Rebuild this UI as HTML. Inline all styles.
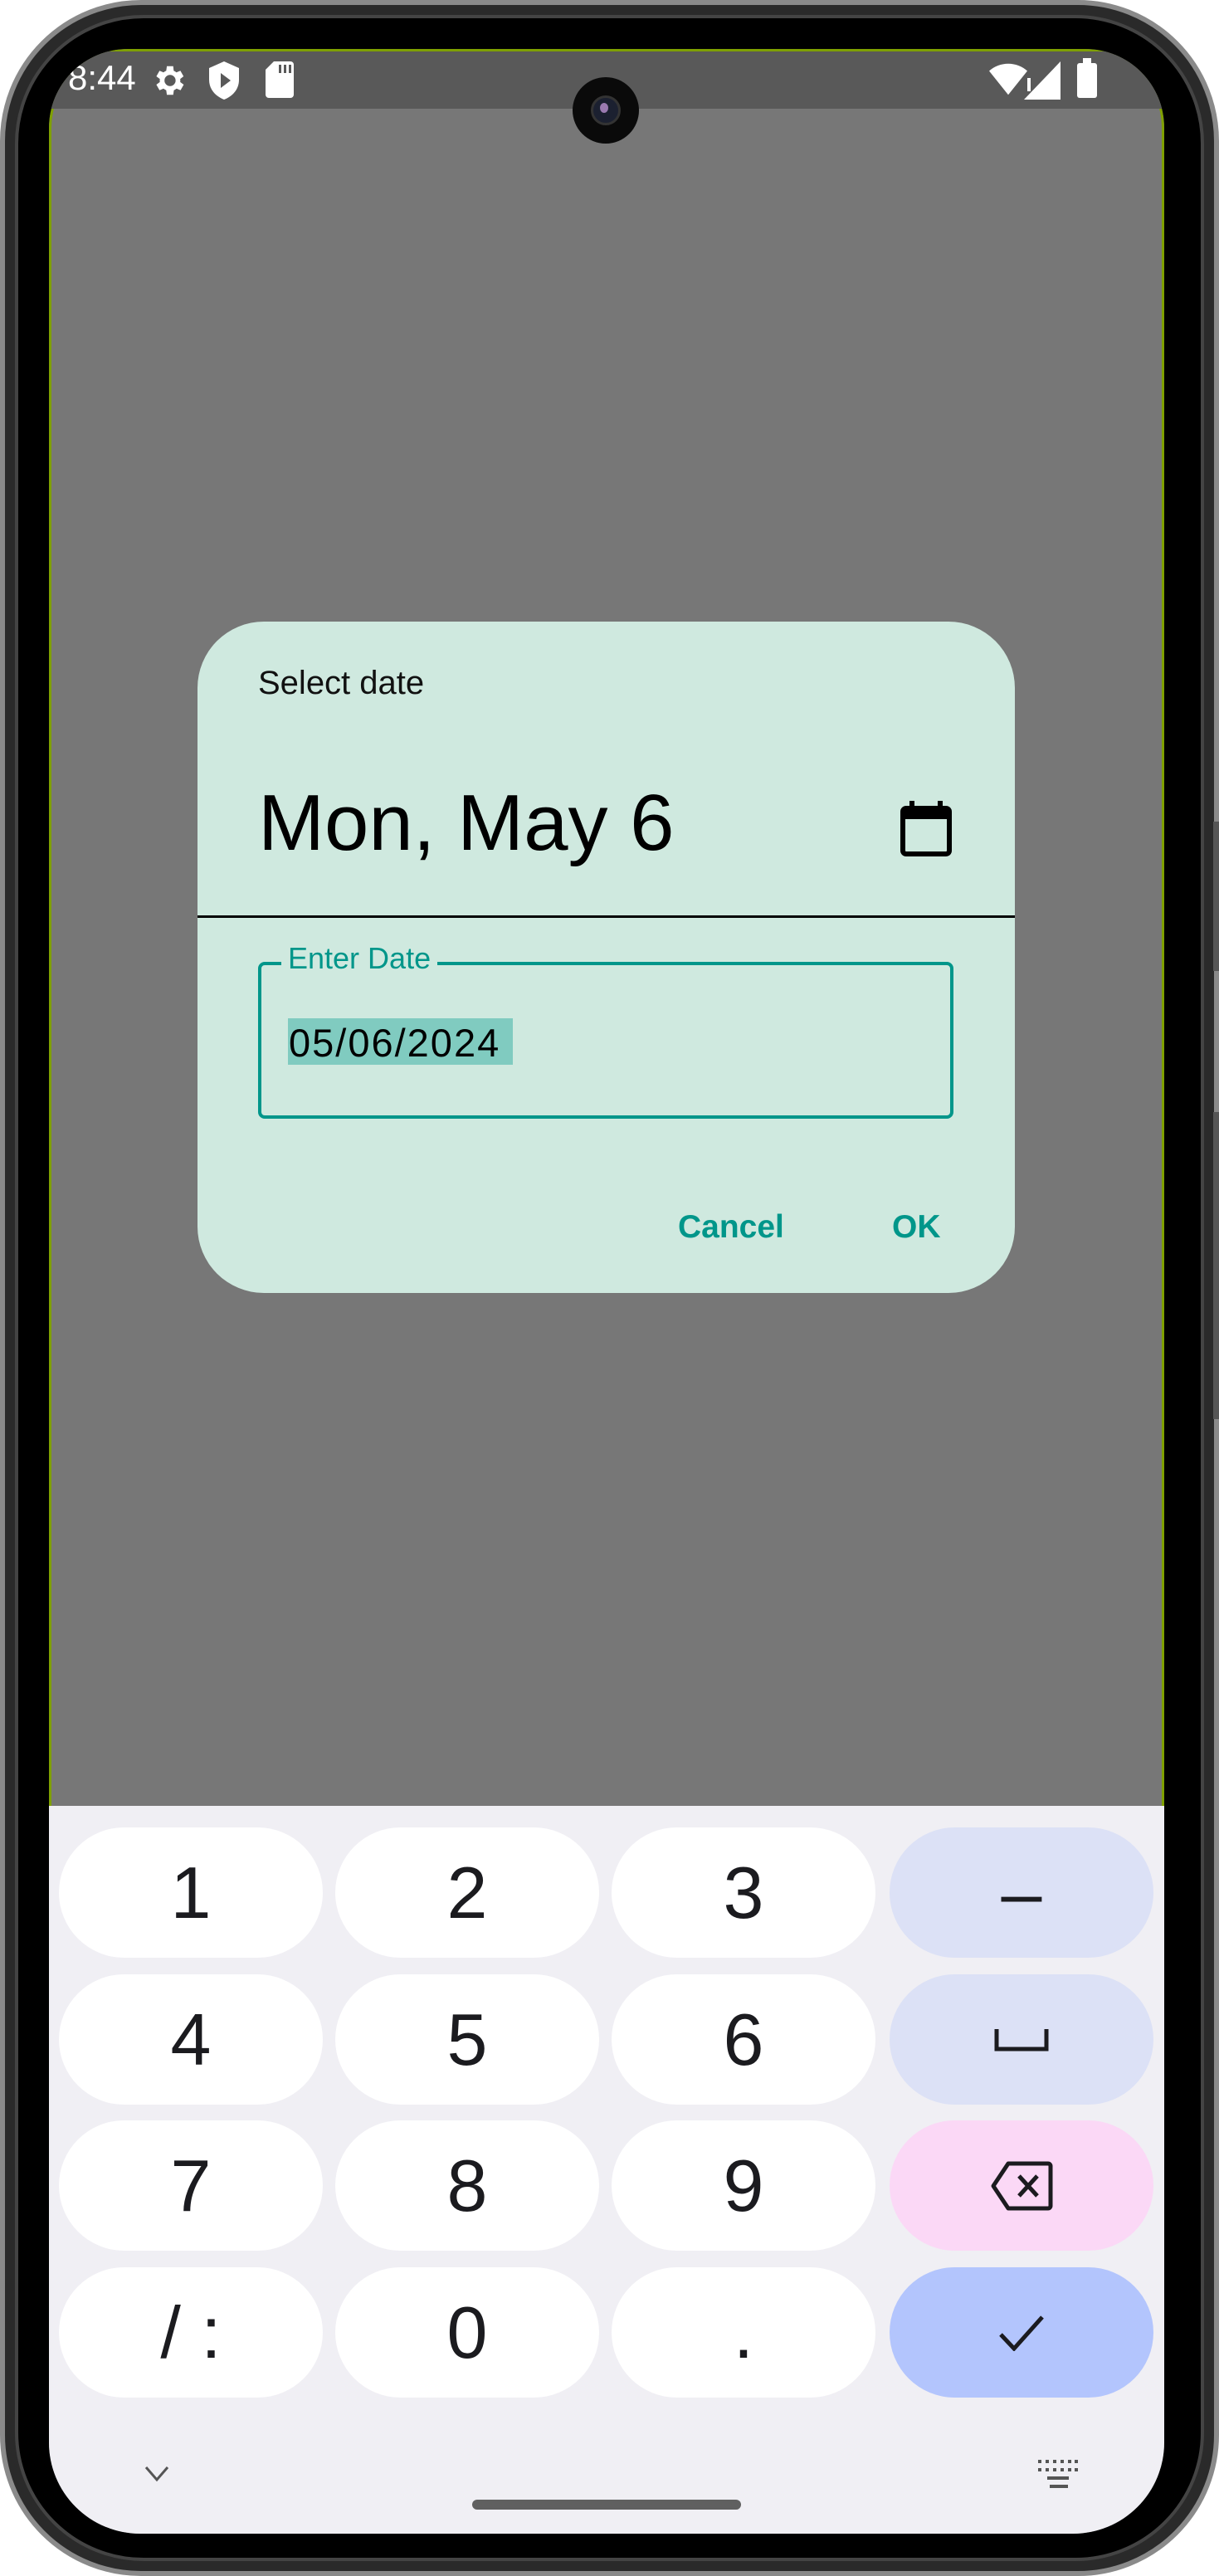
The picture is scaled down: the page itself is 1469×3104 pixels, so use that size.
<!DOCTYPE html>
<html><head><meta charset="utf-8"><style>
*{margin:0;padding:0;box-sizing:border-box}
body{width:1469px;height:3104px;background:#fff;position:relative;overflow:hidden;font-family:"Liberation Sans",sans-serif}
.abs{position:absolute}
.frame{left:0;top:0;width:1469px;height:3104px;border-radius:170px;background:#2a2a2a;border:6px solid #8a8a8a}
.bezel{left:18px;top:18px;width:1433px;height:3068px;border-radius:155px;background:#000;border:4px solid #444}
.screen{left:59px;top:59px;width:1344px;height:2994px;border-radius:95px 95px 110px 110px;overflow:hidden;background:#777}
.status{left:0;top:0;width:1344px;height:72px;background:#595959}
.kb{left:0;top:2117px;width:1344px;height:877px;background:#f0eff4}
.key{position:absolute;width:318px;height:157px;border-radius:79px;background:#fff;display:flex;align-items:center;justify-content:center;font-size:88px;color:#1b1b1f}
.dlg{left:238px;top:749px;width:985px;height:809px;border-radius:80px;background:#cfe9df}
</style></head><body>
<div class="abs frame"></div>
<div class="abs" style="left:1462px;top:990px;width:7px;height:180px;background:#555"></div>
<div class="abs" style="left:1462px;top:1340px;width:7px;height:370px;background:#555"></div>
<div class="abs bezel"></div>
<div class="abs screen">
  <div class="abs" style="left:0;top:0;width:1344px;height:2117px;border:3px solid #7fa000;border-bottom:none;border-radius:95px 95px 0 0"></div>
  <div class="abs status" style="left:3px;top:3px;width:1338px;height:69px">
    <div class="abs" style="left:20px;top:8px;color:#fff;font-size:42px">8:44</div>
    <svg class="abs" style="left:118px;top:12px" width="46" height="46" viewBox="0 0 24 24"><path fill="#fff" d="M19.4 13a7.5 7.5 0 000-2l2.1-1.6-2-3.5-2.5 1a7 7 0 00-1.7-1L15 3h-4l-.4 2.9a7 7 0 00-1.7 1l-2.5-1-2 3.5L6.6 11a7.5 7.5 0 000 2l-2.2 1.6 2 3.5 2.5-1a7 7 0 001.7 1L11 21h4l.4-2.9a7 7 0 001.7-1l2.5 1 2-3.5zM13 15.5a3.5 3.5 0 110-7 3.5 3.5 0 010 7z"/></svg>
    <svg class="abs" style="left:190px;top:12px" width="36" height="46" viewBox="0 0 18 23"><path fill="#fff" d="M9 0L0 4v7c0 6 4 10 9 12 5-2 9-6 9-12V4z"/><path fill="#595959" d="M7 7v9l6-4.5z"/></svg>
    <svg class="abs" style="left:258px;top:12px" width="34" height="44" viewBox="0 0 17 22"><path fill="#fff" d="M5 0h10a2 2 0 012 2v18a2 2 0 01-2 2H2a2 2 0 01-2-2V5z"/><path fill="#595959" d="M8 2h1.5v5H8zM11 2h1.5v5H11zM14 2h1.5v5H14z"/></svg>
    <svg class="abs" style="left:1130px;top:12px" width="46" height="46" viewBox="0 0 24 24"><path fill="#fff" d="M12 21L0 6a18 18 0 0124 0z"/></svg>
    <svg class="abs" style="left:1172px;top:12px" width="44" height="46" viewBox="0 0 22 23"><path fill="#fff" d="M22 0v23H0z"/><rect x="2" y="10" width="2" height="8" fill="#fff"/></svg>
    <div class="abs" style="left:1236px;top:14px;width:24px;height:42px;background:#fff;border-radius:3px"></div>
    <div class="abs" style="left:1243px;top:8px;width:10px;height:8px;background:#fff"></div>
  </div>
  <div class="abs" style="left:631px;top:34px;width:80px;height:80px;border-radius:50%;background:#0a0a0a"></div>
  <div class="abs" style="left:653px;top:56px;width:36px;height:36px;border-radius:50%;background:#1b2030;border:3px solid #333"></div>
  <div class="abs" style="left:664px;top:65px;width:10px;height:12px;border-radius:50%;background:#9a7ab0"></div>

  <div class="abs dlg" style="left:179px;top:690px">
    <div class="abs" style="left:73px;top:52px;font-size:40px;color:#111">Select date</div>
    <div class="abs" style="left:73px;top:195px;font-size:96px;color:#000;line-height:1">Mon, May 6</div>
    <svg class="abs" style="left:846px;top:215px" width="64" height="68" viewBox="0 0 64 68"><rect x="4" y="10" width="56" height="55" rx="4" fill="none" stroke="#000" stroke-width="6"/><rect x="4" y="10" width="56" height="13" fill="#000"/><rect x="12" y="1" width="6" height="12" fill="#000"/><rect x="46" y="1" width="6" height="12" fill="#000"/></svg>
    <div class="abs" style="left:0;top:354px;width:985px;height:3px;background:#000"></div>
    <div class="abs" style="left:73px;top:410px;width:838px;height:189px;border:4px solid #00968a;border-radius:8px"></div>
    <div class="abs" style="left:101px;top:385px;padding:0 8px;background:#cfe9df;font-size:36px;color:#00968a">Enter Date</div>
    <div class="abs" style="left:109px;top:478px;height:56px;width:271px;background:#80cbc0"></div>
    <div class="abs" style="left:110px;top:480px;font-size:47px;letter-spacing:2px;color:#000">05/06/2024</div>
    <div class="abs" style="left:579px;top:708px;font-size:39px;font-weight:bold;color:#00968a">Cancel</div>
    <div class="abs" style="left:837px;top:708px;font-size:39px;font-weight:bold;color:#00968a">OK</div>
  </div>

  <div class="abs kb">
    <div class="key" style="left:12px;top:26px">1</div>
    <div class="key" style="left:345px;top:26px">2</div>
    <div class="key" style="left:678px;top:26px">3</div>
    <div class="key" style="left:1013px;top:26px;background:#dce1f6">–</div>
    <div class="key" style="left:12px;top:203px">4</div>
    <div class="key" style="left:345px;top:203px">5</div>
    <div class="key" style="left:678px;top:203px">6</div>
    <div class="key" style="left:1013px;top:203px;background:#dce1f6"><svg width="66" height="30" viewBox="0 0 66 30"><path d="M3 2v24h60V2" fill="none" stroke="#1b1b1f" stroke-width="5"/></svg></div>
    <div class="key" style="left:12px;top:379px">7</div>
    <div class="key" style="left:345px;top:379px">8</div>
    <div class="key" style="left:678px;top:379px">9</div>
    <div class="key" style="left:1013px;top:379px;background:#fbd8f6"><svg width="76" height="60" viewBox="0 0 76 60"><path d="M22 3h48a3 3 0 013 3v48a3 3 0 01-3 3H22L4 30z" fill="none" stroke="#1b1b1f" stroke-width="5" stroke-linejoin="round"/><path d="M35 18l22 24M57 18L35 42" stroke="#1b1b1f" stroke-width="5"/></svg></div>
    <div class="key" style="left:12px;top:556px">/ :</div>
    <div class="key" style="left:345px;top:556px">0</div>
    <div class="key" style="left:678px;top:556px">.</div>
    <div class="key" style="left:1013px;top:556px;background:#b3c5fd"><svg width="56" height="44" viewBox="0 0 56 44"><path d="M3 24l16 17L53 3" fill="none" stroke="#1b1b1f" stroke-width="5"/></svg></div>
    <svg class="abs" style="left:115px;top:795px" width="30" height="20" viewBox="0 0 30 20"><path d="M2 2l13 15L28 2" fill="none" stroke="#555" stroke-width="3"/></svg>
    <svg class="abs" style="left:1192px;top:788px" width="48" height="36" viewBox="0 0 48 36"><g fill="#555"><rect x="0" y="0" width="4" height="4"/><rect x="9" y="0" width="4" height="4"/><rect x="18" y="0" width="4" height="4"/><rect x="27" y="0" width="4" height="4"/><rect x="36" y="0" width="4" height="4"/><rect x="44" y="0" width="4" height="4"/><rect x="0" y="10" width="4" height="4"/><rect x="9" y="10" width="4" height="4"/><rect x="18" y="10" width="4" height="4"/><rect x="27" y="10" width="4" height="4"/><rect x="36" y="10" width="4" height="4"/><rect x="44" y="10" width="4" height="4"/><rect x="11" y="20" width="26" height="4"/><rect x="14" y="30" width="22" height="4"/></g></svg>
    <div class="abs" style="left:510px;top:836px;width:324px;height:12px;border-radius:6px;background:#606060"></div>
  </div>
</div>
</body></html>
